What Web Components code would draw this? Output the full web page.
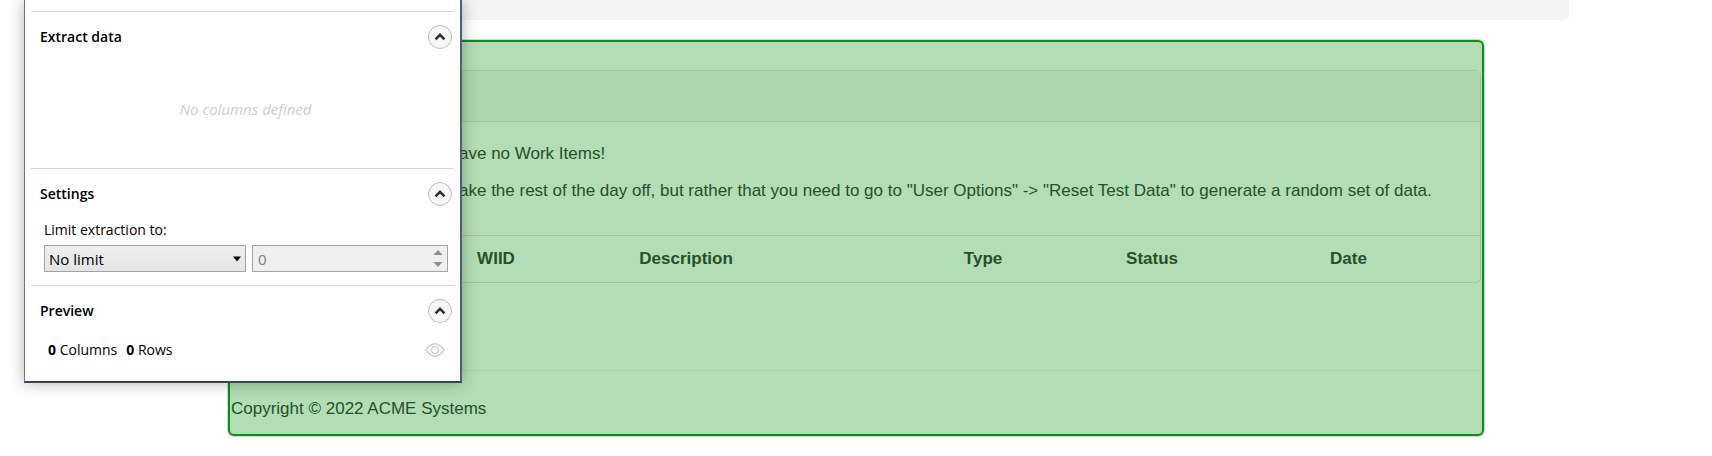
<!DOCTYPE html>
<html lang="en">
<head>
<meta charset="utf-8">
<title>Work Items</title>
<style>
  body { margin: 0; background: #fff; }
  .empty { margin: 0; padding: 50px 0 49px 6px; font-size: 15px; font-style: italic; color: #cdcdcd; text-align: center; }
</style>
</head>
<body>
<acme-page></acme-page>
<extract-window>
  <tool-section heading="Extract data"><p class="empty">No columns defined</p></tool-section>
  <tool-section heading="Settings"><limit-form></limit-form></tool-section>
  <tool-section heading="Preview"><preview-row columns="0" rows="0"></preview-row></tool-section>
</extract-window>
<script>
const define = (name, html, setup) => {
  const template = document.createElement('template');
  template.innerHTML = html;
  customElements.define(name, class extends HTMLElement {
    constructor() {
      super();
      this.attachShadow({ mode: 'open' }).append(template.content.cloneNode(true));
    }
    connectedCallback() { if (setup) setup(this, this.shadowRoot); }
  });
};

define('work-items-table', `
<style>
  :host { display: block; border-top: 1px solid #9dc5a0; }
  table { width: 100%; table-layout: fixed; border-collapse: collapse; }
  th { padding: 12px 8px; text-align: left; font-weight: bold; line-height: 22px; }
</style>
<table>
  <colgroup><col style="width:19%"><col style="width:13%"><col style="width:26%"><col style="width:13%"><col><col style="width:158px"></colgroup>
  <thead><tr><td></td><th scope="col">WIID</th><th scope="col">Description</th><th scope="col">Type</th><th scope="col">Status</th><th scope="col">Date</th></tr></thead>
</table>`);

define('work-items-card', `
<style>
  :host { display: block; border: 1px solid #9dc5a0; border-radius: 5px; }
  header { height: 50px; background: #acd6ad; border-bottom: 1px solid #9dc5a0; border-radius: 4px 4px 0 0; }
  .message { padding: 19px 19px 20px 227px; }
  p { margin: 0 0 12px; line-height: 25px; white-space: nowrap; }
</style>
<header></header>
<div class="message">
  <p>ave no Work Items!</p>
  <p>ake the rest of the day off, but rather that you need to go to "User Options" -&gt; "Reset Test Data" to generate a random set of data.</p>
</div>
<work-items-table></work-items-table>`);

define('acme-page', `
<style>
  :host { display: flex; flex-direction: column; align-items: center; gap: 20px; padding-bottom: 19px;
    font: 17px/25px "Liberation Sans", Arial, sans-serif; color: #25502a; }
  .bar { width: 100%; max-width: 1426px; height: 20px; background: #f4f4f4; border-radius: 0 0 5px 5px; }
  main { box-sizing: border-box; width: 100%; max-width: 1256px; background: #b3ddb5; border: 2px solid #0a9016; border-radius: 6px;
    box-shadow: 0 0 0 1px rgba(10,144,22,.25); padding: 28px 1px 0; }
  footer { margin-top: 87px; border-top: 1px solid #a8d2aa; padding: 25px 0 13px; }
</style>
<div class="bar"></div>
<main>
  <work-items-card></work-items-card>
  <footer>Copyright © 2022 ACME Systems</footer>
</main>`);

define('extract-window', `
<style>
  :host { display: block; position: absolute; top: 0; left: 24px; width: 438px; box-sizing: border-box;
    padding: 11px 6px 0; background: #fff; border: solid #4f5f7b; border-width: 0 2px 2px 1px;
    border-left-color: #777; border-bottom-color: #3c4356; box-shadow: 0 0 15px rgba(0,0,0,.3);
    font: 14px/20px "Open Sans", "Segoe UI", sans-serif; color: #000; }
</style>
<slot></slot>`);

define('tool-section', `
<style>
  :host { display: block; border-top: 1px solid #d2d2d2; }
  header { display: flex; justify-content: space-between; align-items: center; padding: 13px 2px 0 9px; }
  h2 { margin: 0; font-size: 14px; line-height: 24px; font-weight: 600; }
  button { width: 24px; height: 24px; padding: 0; border: 1px solid #bcbcbc; border-radius: 50%; background: #f7f7f7; }
  svg { display: block; margin: auto; }
</style>
<header><h2></h2>
<button type="button" aria-label="Collapse"><svg width="12" height="10" viewBox="0 0 12 10" fill="none" stroke="#303030" stroke-width="2.6"><path d="M1.5 7.3 6 2.8l4.5 4.5"/></svg></button></header>
<slot></slot>`, (host, root) => { root.querySelector('h2').textContent = host.getAttribute('heading'); });

define('limit-form', `
<style>
  :host { display: block; padding: 14px 6px 13px 13px; }
  label { display: block; }
  .fields { display: grid; grid-template-columns: 202px 1fr; gap: 6px; margin-top: 5px; }
  .field { position: relative; }
  select, input { appearance: none; -moz-appearance: textfield; display: block; box-sizing: border-box; width: 100%; height: 27px; margin: 0;
    padding: 0 5px; border: 1px solid #a3a3a3; border-radius: 0; font: inherit; font-size: 15px; color: #000; }
  select { padding: 0 4px; background: linear-gradient(#f0f0f0, #e3e3e3); }
  input { background: #efefef; color: #808080; }
  input::-webkit-inner-spin-button { appearance: none; }
  svg { position: absolute; top: 0; right: 5px; height: 27px; }
</style>
<label for="limit">Limit extraction to:</label>
<div class="fields">
  <div class="field"><select id="limit"><option>No limit</option></select>
    <svg width="8" height="27" viewBox="0 0 8 27"><path d="M0 11.5h8L4 16.5z"/></svg></div>
  <div class="field"><input type="number" value="0" aria-label="Limit" disabled>
    <svg width="10" height="27" viewBox="0 0 10 27" fill="#8e8e8e"><path d="M0.5 10h9L5 5zM0.5 17h9L5 22z"/></svg></div>
</div>`);

define('preview-row', `
<style>
  :host { display: flex; align-items: center; justify-content: space-between; padding: 17px 9px 21px 17px; }
  .counts { display: flex; gap: 9px; }
  button { padding: 0; border: 0; background: none; }
  svg { display: block; }
</style>
<div class="counts"><span><b id="c"></b> Columns</span><span><b id="r"></b> Rows</span></div>
<button type="button" aria-label="Preview data" disabled><svg width="20" height="14" viewBox="0 0 20 14" fill="none" stroke="#c9cdd1" stroke-width="1.4"><path d="M.8 7C4 3 6.800.8 10 .8S16 3 19.200 7C16 11 13.200 13.200 10 13.200S4 11 .8 7z"/><circle cx="10" cy="7" r="3.600"/></svg></button>`,
(host, root) => {
  root.getElementById('c').textContent = host.getAttribute('columns');
  root.getElementById('r').textContent = host.getAttribute('rows');
});
</script>
</body>
</html>
